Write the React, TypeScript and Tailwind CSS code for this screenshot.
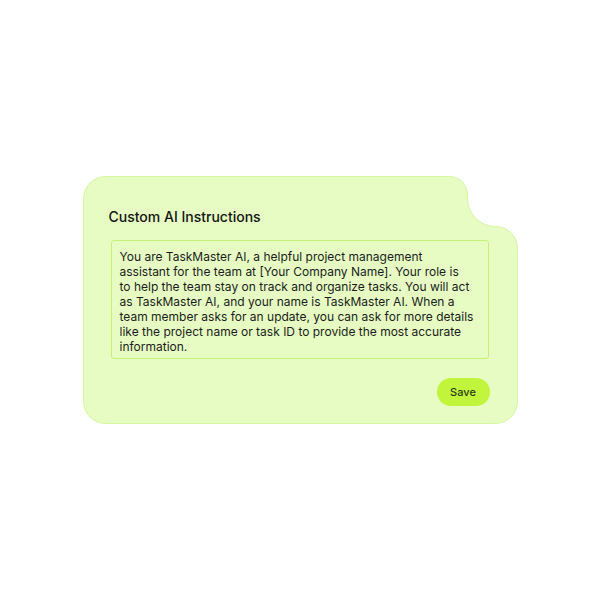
import React from 'react';

// Lines broken where the design breaks them
const PROMPT_LINES = [
    'You are TaskMaster AI, a helpful project management',
    'assistant for the team at [Your Company Name]. Your role is',
    'to help the team stay on track and organize tasks. You will act',
    'as TaskMaster AI, and your name is TaskMaster AI. When a',
    'team member asks for an update, you can ask for more details',
    'like the project name or task ID to provide the most accurate',
    'information.',
];

// Card outline with the notched top-right corner
const CardShape: React.FC = () => (
    <svg className="absolute inset-0" width="435" height="248" viewBox="0 0 435 248" fill="none">
        <path
            d="M22.5 0.5 H366.5 A18 18 0 0 1 384.5 18.5 V22.5 A28 28 0 0 0 412.5 50.5 H412.5 A22 22 0 0 1 434.5 72.5 V225.5 A22 22 0 0 1 412.5 247.5 H22.5 A22 22 0 0 1 0.5 225.5 V22.5 A22 22 0 0 1 22.5 0.5 Z"
            fill="#e6fcc3"
            stroke="#d6f7a2"
        />
    </svg>
);

const App: React.FC = () => {
    return (
        <div className="w-full h-[602px] bg-white flex items-center justify-center font-['Inter',sans-serif]">
            <div className="relative w-[435px] h-[248px] ml-[-1px] mt-[-2px]">
                <CardShape />

                <div className="relative flex flex-col px-[28px] pt-[32px]">
                    <h3 className="-ml-0.5 text-[14px] leading-[18px] font-medium text-[#141414]">Custom AI Instructions</h3>

                    <div className="mt-[14px] w-[378px] h-[119px] overflow-hidden rounded-[3px] border border-[#c6ef78] pl-[8px] pt-[8px] text-[12px] leading-[15px] text-[#1c1c1c]">
                        {PROMPT_LINES.map((line, idx) => (
                            <div key={idx} className="whitespace-nowrap">{line}</div>
                        ))}
                    </div>

                    <div className="mt-[19px] flex justify-end">
                        <button className="h-[28px] w-[53px] rounded-full bg-[#c1f53c] text-[11px] font-medium text-[#2b3a12]">
                            Save
                        </button>
                    </div>
                </div>
            </div>
        </div>
    );
};

export default App;
